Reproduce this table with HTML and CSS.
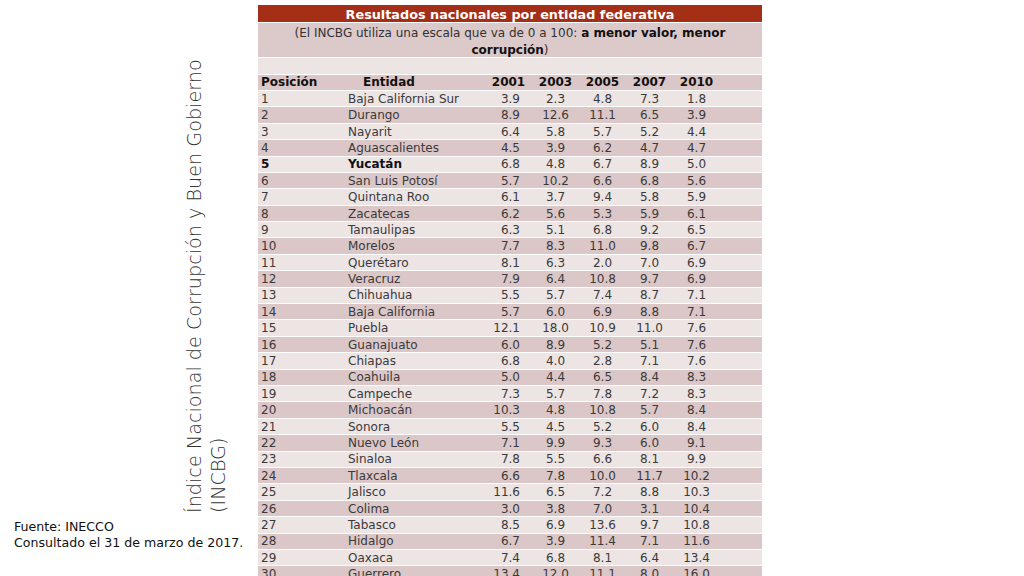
FILE: index.html
```html
<!DOCTYPE html>
<html lang="es">
<head>
<meta charset="utf-8">
<title>INCBG</title>
<link rel="stylesheet" href="styles.css">
</head>
<body>
<div class="slide">
  <aside class="side">
    <div class="vtitle">Índice Nacional de Corrupción y Buen Gobierno<br>(INCBG)</div>
    <p class="source">Fuente: INECCO<br>Consultado el 31 de marzo de 2017.</p>
  </aside>
  <section class="table">
    <div class="title">Resultados nacionales por entidad federativa</div>
    <div class="note">(El INCBG utiliza una escala que va de 0 a 100: <b>a menor valor, menor</b><br><b>corrupción</b>)</div>
    <div class="blank"></div>
    <div class="row head"><span>Posición</span><span class="ent">Entidad</span><span>2001</span><span>2003</span><span>2005</span><span>2007</span><span>2010</span></div>
    <div class="row"><span>1</span><span>Baja California Sur</span><span>3.9</span><span>2.3</span><span>4.8</span><span>7.3</span><span>1.8</span></div>
    <div class="row"><span>2</span><span>Durango</span><span>8.9</span><span>12.6</span><span>11.1</span><span>6.5</span><span>3.9</span></div>
    <div class="row"><span>3</span><span>Nayarit</span><span>6.4</span><span>5.8</span><span>5.7</span><span>5.2</span><span>4.4</span></div>
    <div class="row"><span>4</span><span>Aguascalientes</span><span>4.5</span><span>3.9</span><span>6.2</span><span>4.7</span><span>4.7</span></div>
    <div class="row strong"><span>5</span><span>Yucatán</span><span>6.8</span><span>4.8</span><span>6.7</span><span>8.9</span><span>5.0</span></div>
    <div class="row"><span>6</span><span>San Luis Potosí</span><span>5.7</span><span>10.2</span><span>6.6</span><span>6.8</span><span>5.6</span></div>
    <div class="row"><span>7</span><span>Quintana Roo</span><span>6.1</span><span>3.7</span><span>9.4</span><span>5.8</span><span>5.9</span></div>
    <div class="row"><span>8</span><span>Zacatecas</span><span>6.2</span><span>5.6</span><span>5.3</span><span>5.9</span><span>6.1</span></div>
    <div class="row"><span>9</span><span>Tamaulipas</span><span>6.3</span><span>5.1</span><span>6.8</span><span>9.2</span><span>6.5</span></div>
    <div class="row"><span>10</span><span>Morelos</span><span>7.7</span><span>8.3</span><span>11.0</span><span>9.8</span><span>6.7</span></div>
    <div class="row"><span>11</span><span>Querétaro</span><span>8.1</span><span>6.3</span><span>2.0</span><span>7.0</span><span>6.9</span></div>
    <div class="row"><span>12</span><span>Veracruz</span><span>7.9</span><span>6.4</span><span>10.8</span><span>9.7</span><span>6.9</span></div>
    <div class="row"><span>13</span><span>Chihuahua</span><span>5.5</span><span>5.7</span><span>7.4</span><span>8.7</span><span>7.1</span></div>
    <div class="row"><span>14</span><span>Baja California</span><span>5.7</span><span>6.0</span><span>6.9</span><span>8.8</span><span>7.1</span></div>
    <div class="row"><span>15</span><span>Puebla</span><span>12.1</span><span>18.0</span><span>10.9</span><span>11.0</span><span>7.6</span></div>
    <div class="row"><span>16</span><span>Guanajuato</span><span>6.0</span><span>8.9</span><span>5.2</span><span>5.1</span><span>7.6</span></div>
    <div class="row"><span>17</span><span>Chiapas</span><span>6.8</span><span>4.0</span><span>2.8</span><span>7.1</span><span>7.6</span></div>
    <div class="row"><span>18</span><span>Coahuila</span><span>5.0</span><span>4.4</span><span>6.5</span><span>8.4</span><span>8.3</span></div>
    <div class="row"><span>19</span><span>Campeche</span><span>7.3</span><span>5.7</span><span>7.8</span><span>7.2</span><span>8.3</span></div>
    <div class="row"><span>20</span><span>Michoacán</span><span>10.3</span><span>4.8</span><span>10.8</span><span>5.7</span><span>8.4</span></div>
    <div class="row"><span>21</span><span>Sonora</span><span>5.5</span><span>4.5</span><span>5.2</span><span>6.0</span><span>8.4</span></div>
    <div class="row"><span>22</span><span>Nuevo León</span><span>7.1</span><span>9.9</span><span>9.3</span><span>6.0</span><span>9.1</span></div>
    <div class="row"><span>23</span><span>Sinaloa</span><span>7.8</span><span>5.5</span><span>6.6</span><span>8.1</span><span>9.9</span></div>
    <div class="row"><span>24</span><span>Tlaxcala</span><span>6.6</span><span>7.8</span><span>10.0</span><span>11.7</span><span>10.2</span></div>
    <div class="row"><span>25</span><span>Jalisco</span><span>11.6</span><span>6.5</span><span>7.2</span><span>8.8</span><span>10.3</span></div>
    <div class="row"><span>26</span><span>Colima</span><span>3.0</span><span>3.8</span><span>7.0</span><span>3.1</span><span>10.4</span></div>
    <div class="row"><span>27</span><span>Tabasco</span><span>8.5</span><span>6.9</span><span>13.6</span><span>9.7</span><span>10.8</span></div>
    <div class="row"><span>28</span><span>Hidalgo</span><span>6.7</span><span>3.9</span><span>11.4</span><span>7.1</span><span>11.6</span></div>
    <div class="row"><span>29</span><span>Oaxaca</span><span>7.4</span><span>6.8</span><span>8.1</span><span>6.4</span><span>13.4</span></div>
    <div class="row"><span>30</span><span>Guerrero</span><span>13.4</span><span>12.0</span><span>11.1</span><span>8.0</span><span>16.0</span></div>
  </section>
</div>
</body>
</html>
```
FILE: styles.css
```css
html, body {
  margin: 0;
  padding: 0;
  background: #ffffff;
}

.slide {
  width: 1024px;
  height: 576px;
  overflow: hidden;
  display: flex;
  font-family: "DejaVu Sans", "Liberation Sans", sans-serif;
  color: #3a3a3a;
}

.side {
  width: 258px;
  flex: none;
  display: flex;
  flex-direction: column;
}

.vtitle {
  writing-mode: vertical-rl;
  transform: rotate(180deg);
  height: 458px;
  margin: 55px 0 0 183px;
  font-size: 19.2px;
  line-height: 24px;
  font-weight: 300;
  color: #333333;
  white-space: nowrap;
}

.source {
  margin: 6px 0 0 14px;
  font-size: 12.6px;
  line-height: 16px;
  color: #111111;
  white-space: nowrap;
}

.table {
  width: 504px;
  flex: none;
  margin-top: 5px;
  font-size: 12px;
}

.title {
  box-sizing: border-box;
  height: 17.4px;
  padding-top: 1.5px;
  line-height: 16.4px;
  margin-bottom: 1px;
  background: #a52e17;
  color: #ffffff;
  font-weight: bold;
  font-size: 12.8px;
  text-align: center;
}

.note {
  box-sizing: border-box;
  height: 33.8px;
  padding-top: 1.8px;
  line-height: 16.4px;
  margin-bottom: 1px;
  background: #dcc9c9;
  text-align: center;
  color: #333333;
}

.note b {
  color: #111111;
}

.blank {
  height: 15.4px;
  margin-bottom: 1px;
  background: #ede4e4;
}

.row {
  box-sizing: border-box;
  display: grid;
  grid-template-columns: 88px 139px repeat(5, 47px) 42px;
  grid-template-rows: 13.6px;
  height: 15.4px;
  padding-top: 1.8px;
  line-height: 13.6px;
  margin-bottom: 1px;
  background: #ede4e4;
  white-space: nowrap;
}

.row:nth-child(even) {
  background: #dbc7c7;
}

.row span {
  text-align: center;
}

.row span:nth-child(1) {
  text-align: left;
  padding-left: 3px;
}

.row span:nth-child(2) {
  text-align: left;
  padding-left: 2px;
}

.row span:nth-child(3) {
  text-align: right;
  padding-right: 12px;
}

.row.head span {
  text-align: center;
  font-weight: bold;
  color: #111111;
  padding: 0;
}

.row.head span:nth-child(1) {
  text-align: left;
  padding-left: 3px;
}

.row.head .ent {
  text-align: left;
  padding-left: 17px;
}

.row.strong span:nth-child(1),
.row.strong span:nth-child(2) {
  font-weight: bold;
  color: #111111;
}
```
